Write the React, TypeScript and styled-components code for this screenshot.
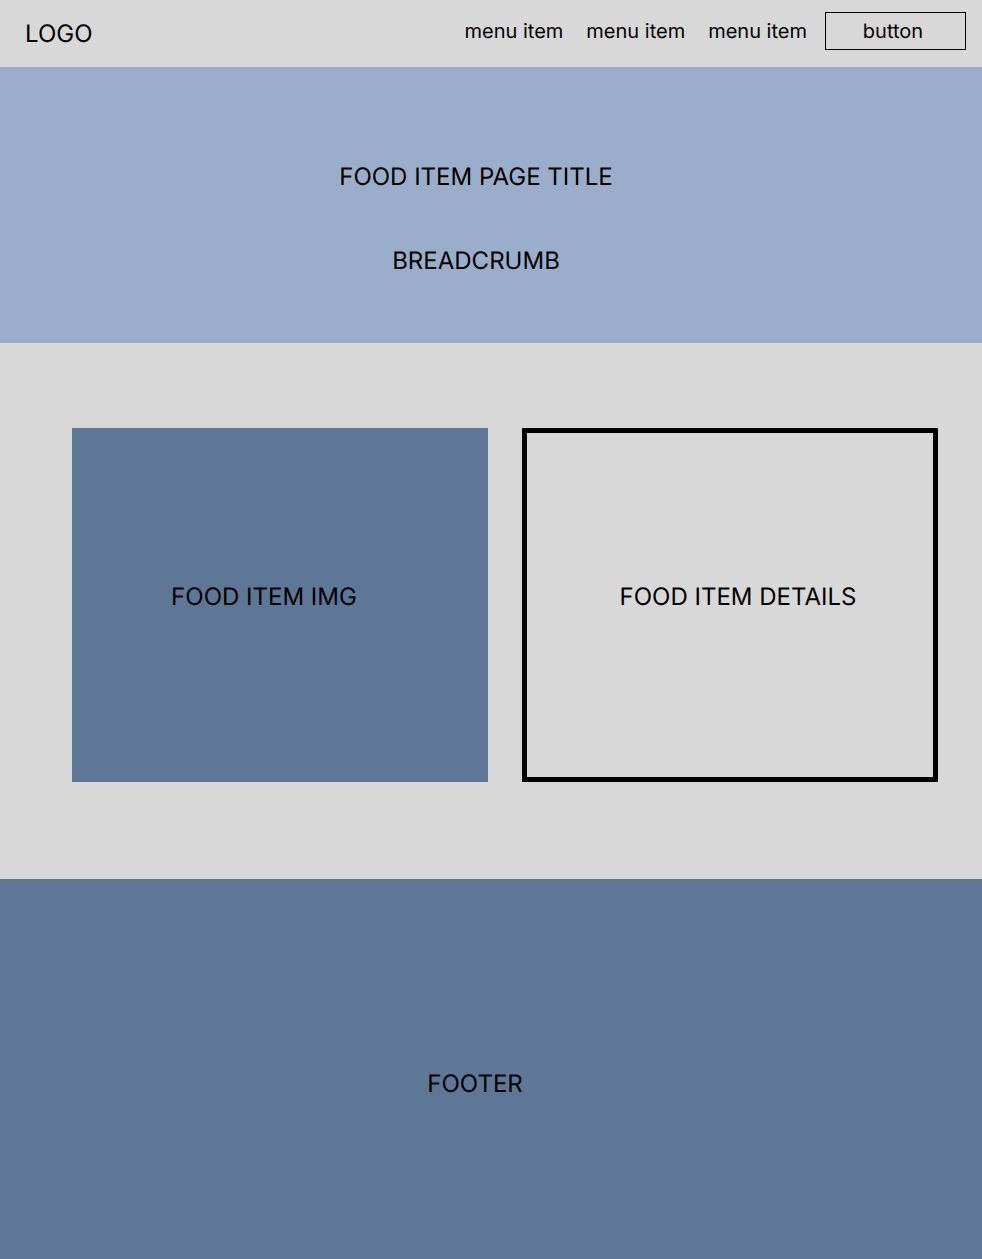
import React from "react";
import styled, { createGlobalStyle } from "styled-components";

const GlobalStyle = createGlobalStyle`
  * { box-sizing: border-box; }
  body {
    margin: 0;
    background: #d8d8d8;
    color: #000;
    font-family: Inter, "Liberation Sans", sans-serif;
    font-size: 24px;
    line-height: 28px;
    text-rendering: geometricPrecision;
  }
`;

const Page = styled.div`
  display: flex;
  flex-direction: column;
  min-height: 100vh;
`;

const Header = styled.header`
  display: flex;
  align-items: flex-start;
  justify-content: space-between;
  padding: 12px 16px 17px 25px;
`;

const Logo = styled.a`
  padding-top: 8px;
  color: inherit;
  text-decoration: none;
`;

const Nav = styled.nav`
  display: flex;
  align-items: center;
  gap: 18px;
  font-size: 20px;
`;

const Menu = styled.ul`
  display: flex;
  gap: 23px;
  margin: 0;
  padding: 0;
  list-style: none;
`;

const MenuLink = styled.a`
  color: inherit;
  text-decoration: none;
`;

const NavButton = styled.button`
  width: 141px;
  height: 38px;
  padding: 0 5px 0 0;
  border: 1px solid #000;
  background: transparent;
  color: inherit;
  font: inherit;
  text-rendering: inherit;
`;

const Hero = styled.section`
  display: flex;
  flex-direction: column;
  align-items: center;
  gap: 56px;
  padding: 96px 30px 68px 0;
  background: #9aaecc;
`;

const Heading = styled.h1`
  margin: 0;
  font: inherit;
`;

const Main = styled.main`
  display: grid;
  grid-template-columns: 1fr 1fr;
  gap: 34px;
  padding: 85px 44px 97px 72px;
`;

const Panel = styled.section<{ $outlined?: boolean }>`
  display: flex;
  align-items: center;
  justify-content: center;
  min-height: 354px;
  padding: ${(p) => (p.$outlined ? "0 0 16px 16px" : "0 32px 16px 0")};
  background: ${(p) => (p.$outlined ? "transparent" : "#5e7796")};
  border: ${(p) => (p.$outlined ? "5px solid #000" : "none")};
`;

const PanelTitle = styled.h2`
  margin: 0;
  font: inherit;
`;

const Footer = styled.footer`
  display: flex;
  flex: 1;
  align-items: center;
  justify-content: center;
  min-height: 380px;
  padding: 30px 32px 0 0;
  background: #5e7796;
`;

const menuItems = ["menu item", "menu item", "menu item"];

export default function App() {
  return (
    <Page>
      <GlobalStyle />
      <Header>
        <Logo href="#">LOGO</Logo>
        <Nav>
          <Menu>
            {menuItems.map((item, index) => (
              <li key={index}>
                <MenuLink href="#">{item}</MenuLink>
              </li>
            ))}
          </Menu>
          <NavButton type="button">button</NavButton>
        </Nav>
      </Header>
      <Hero>
        <Heading>FOOD ITEM PAGE TITLE</Heading>
        <nav aria-label="Breadcrumb">BREADCRUMB</nav>
      </Hero>
      <Main>
        <Panel>
          <PanelTitle>FOOD ITEM IMG</PanelTitle>
        </Panel>
        <Panel $outlined>
          <PanelTitle>FOOD ITEM DETAILS</PanelTitle>
        </Panel>
      </Main>
      <Footer>FOOTER</Footer>
    </Page>
  );
}
